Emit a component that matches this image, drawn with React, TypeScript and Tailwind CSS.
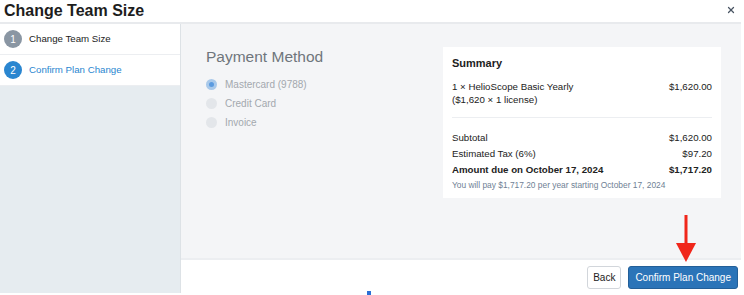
import { X } from 'lucide-react';

const font = { fontFamily: '"Liberation Sans", Arial, sans-serif' };

function Step({ n, label, active }: { n: number; label: string; active?: boolean }) {
  return (
    <div className="flex items-center h-[31px] pl-[4px] border-b border-[#eceef1] bg-white">
      <div
        className={`w-[18px] h-[18px] rounded-full flex items-center justify-center text-[10px] text-white ${
          active ? 'bg-[#2a86d0]' : 'bg-[#8a96a3]'
        }`}
      >
        {n}
      </div>
      <span className={`ml-[7px] text-[9.7px] ${active ? 'text-[#2a86d0]' : 'text-[#222]'}`}>{label}</span>
    </div>
  );
}

function Radio({ label, checked }: { label: string; checked?: boolean }) {
  return (
    <div className="flex items-center h-[19px]">
      {checked ? (
        <div className="w-[11px] h-[11px] rounded-full bg-[#a9c9ea] flex items-center justify-center">
          <div className="w-[5px] h-[5px] rounded-full bg-[#5b9be0]" />
        </div>
      ) : (
        <div className="w-[11px] h-[11px] rounded-full bg-[#e3e6ea]" />
      )}
      <span className="ml-[8px] text-[10px] text-[#a3a8ae]">{label}</span>
    </div>
  );
}

function Row({ label, value, bold }: { label: string; value: string; bold?: boolean }) {
  return (
    <div className={`flex justify-between h-[16px] items-center text-[9.7px] text-[#222] ${bold ? 'font-bold' : ''}`}>
      <span>{label}</span>
      <span>{value}</span>
    </div>
  );
}

export default function App() {
  return (
    <div className="w-[744px] h-[295px] bg-white overflow-hidden relative" style={font}>
      <div className="w-[741px] h-full flex flex-col">
        {/* Header */}
        <div className="h-[24px] flex items-center justify-between pl-[4px] pr-[5px] border-b-2 border-[#e8eaed]">
          <h1 className="text-[16px] font-bold text-[#1d1d1d]">Change Team Size</h1>
          <X className="w-[10px] h-[10px] text-[#4a5563] -mt-[3px]" strokeWidth={3} />
        </div>

        <div className="flex flex-1">
          {/* Sidebar */}
          <div className="w-[181px] bg-[#e6ecf0] border-r border-[#dde2e6] h-[269px]">
            <Step n={1} label="Change Team Size" />
            <Step n={2} label="Confirm Plan Change" active />
          </div>

          {/* Main */}
          <div className="flex-1 flex flex-col">
            <div className="h-[236px] bg-[#f4f5f7] flex pl-[25px] pt-[23px] border-b-2 border-[#eceef1]">
              <div className="w-[237px]">
                <h2 className="text-[15.5px] text-[#6f757c] leading-[20px] mb-[8px]">Payment Method</h2>
                <Radio label="Mastercard (9788)" checked />
                <Radio label="Credit Card" />
                <Radio label="Invoice" />
              </div>
              <div className="w-[278px] h-[151px] bg-white px-[9px] pt-[9px]">
                <h3 className="text-[11px] leading-[14px] font-bold text-[#1d1d1d] mb-[10px]">Summary</h3>
                <div className="flex justify-between text-[9.7px] text-[#222] leading-[13px]">
                  <span>
                    1 × HelioScope Basic Yearly
                    <br />
                    ($1,620 × 1 license)
                  </span>
                  <span>$1,620.00</span>
                </div>
                <div className="border-t border-[#eceef1] mt-[11px] mb-[12px]" />
                <Row label="Subtotal" value="$1,620.00" />
                <Row label="Estimated Tax (6%)" value="$97.20" />
                <Row label="Amount due on October 17, 2024" value="$1,717.20" bold />
                <p className="text-[8.4px] leading-[12px] text-[#6f7f95] mt-[1px]">
                  You will pay $1,717.20 per year starting October 17, 2024
                </p>
              </div>
            </div>
            <div className="flex justify-end items-center gap-[7px] pt-[6px] pr-[3px]">
              <button className="h-[23px] px-[5px] text-[10px] text-[#222] bg-white border border-[#d2d6db] rounded-[3px]">
                Back
              </button>
              <button className="h-[23px] px-[6px] text-[10px] text-white bg-[#2b74b8] border border-[#235f98] rounded-[3px]">
                Confirm Plan Change
              </button>
            </div>
          </div>
        </div>
      </div>

      {/* Red arrow annotation */}
      <svg className="absolute left-[676px] top-[215px]" width="20" height="48" viewBox="0 0 20 48">
        <rect x="8.5" y="0" width="3" height="30" fill="#f0261b" />
        <polygon points="0,28 20,28 10,47" fill="#f0261b" />
      </svg>
      <div className="absolute left-[367px] top-[291px] w-[4px] h-[4px] bg-[#2b6fd6]" />
    </div>
  );
}
